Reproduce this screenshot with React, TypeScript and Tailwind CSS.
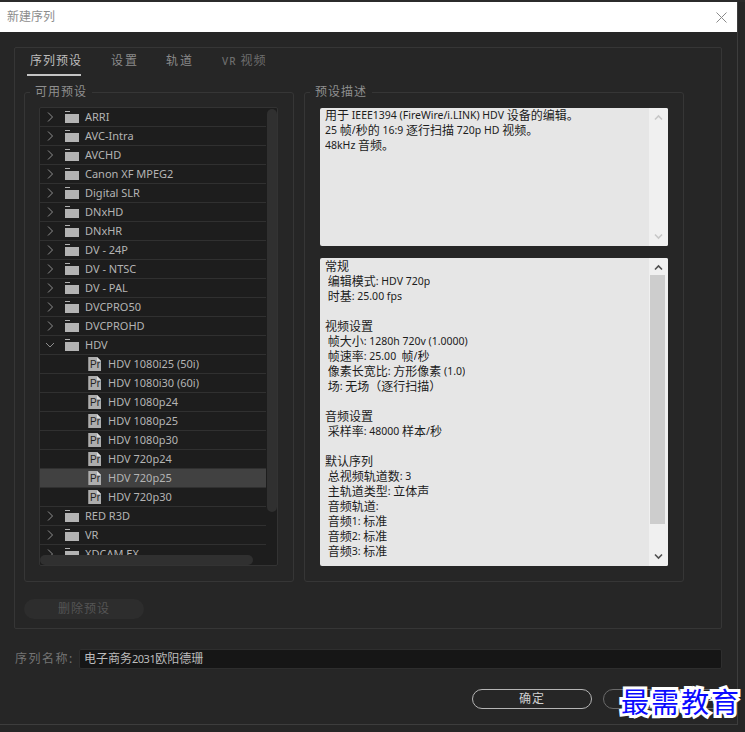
import React from 'react'

const presets = ['ARRI', 'AVC-Intra', 'AVCHD', 'Canon XF MPEG2', 'Digital SLR', 'DNxHD', 'DNxHR', 'DV - 24P', 'DV - NTSC', 'DV - PAL', 'DVCPRO50', 'DVCPROHD']
const hdv = ['HDV 1080i25 (50i)', 'HDV 1080i30 (60i)', 'HDV 1080p24', 'HDV 1080p25', 'HDV 1080p30', 'HDV 720p24', 'HDV 720p25', 'HDV 720p30']
const after = ['RED R3D', 'VR', 'XDCAM EX']

const description = `用于 IEEE1394 (FireWire/i.LINK) HDV 设备的编辑。
25 帧/秒的 16:9 逐行扫描 720p HD 视频。
48kHz 音频。`

const details = `常规
 编辑模式: HDV 720p
 时基: 25.00 fps

视频设置
 帧大小: 1280h 720v (1.0000)
 帧速率: 25.00  帧/秒
 像素长宽比: 方形像素 (1.0)
 场: 无场（逐行扫描）

音频设置
 采样率: 48000 样本/秒

默认序列
 总视频轨道数: 3
 主轨道类型: 立体声
 音频轨道:
 音频1: 标准
 音频2: 标准
 音频3: 标准`

// chinese runs are a bit larger than the latin ones in the reference
function TextBlock({ text }: { text: string }) {
  return (
    <div className="flex-1 pl-[5px] whitespace-pre">
      {text.split('\n').map((line, n) => (
        <div key={n} className="h-[15px] leading-[15px] overflow-hidden">
          {line.split(/([\u3000-\u9fff\uff00-\uffef]+)/).map((p, i) =>
            p === '' ? null : (
              <span key={i} className={i % 2 === 1 ? 'inline-block h-[15px] leading-[15px] align-top overflow-hidden text-[12px]' : 'inline-block h-[15px] leading-[15px] align-top overflow-hidden text-[10.5px]'}>{p}</span>
            )
          )}
        </div>
      ))}
    </div>
  )
}

function Chevron({ open }: { open?: boolean }) {
  return (
    <svg width="10" height="10" viewBox="0 0 10 10" fill="none" stroke="#8f8f8f" strokeWidth="1" className="shrink-0">
      {open ? <path d="M1 3l4 4 4-4" /> : <path d="M3 .5l4.500 4.500-4.500 4.500" />}
    </svg>
  )
}

function Folder() {
  return (
    <svg width="14" height="13" viewBox="0 0 14 13" className="shrink-0">
      <rect x="0" y="0" width="5" height="1" fill="#b0b0b0" />
      <rect x="0" y="3" width="14" height="9" fill="#b3b3b3" />
    </svg>
  )
}

function PrFile() {
  return (
    <svg width="13" height="14" viewBox="0 0 13 14" className="shrink-0">
      <path d="M0 0h9l4 4v10H0z" fill="#adadad" />
      <rect x="0" y="0" width="1" height="14" fill="#8a8a8a" />
      <path d="M9 0l4 4H9z" fill="#dcdcdc" />
      <text x="2" y="11" fontSize="10" fill="#222222" fontFamily="'Liberation Sans', sans-serif">Pr</text>
    </svg>
  )
}

function FolderRow({ name, open }: { name: string; open?: boolean }) {
  return (
    <div className="h-[19px] flex items-center border-b border-[#303030] text-[#b4b4b4] shrink-0">
      <div className="w-[25px] pl-[5px]"><Chevron open={open} /></div>
      <Folder />
      <span className="ml-[6px] whitespace-nowrap">{name}</span>
    </div>
  )
}

function FileRow({ name, active }: { name: string; active?: boolean }) {
  return (
    <div className={active ? 'h-[19px] flex items-center border-b border-[#303030] bg-[#414141] text-[#b4b4b4] shrink-0 pl-[48px]' : 'h-[19px] flex items-center border-b border-[#303030] text-[#b4b4b4] shrink-0 pl-[48px]'}>
      <PrFile />
      <span className="ml-[7px] whitespace-nowrap">{name}</span>
    </div>
  )
}

function Arrow({ up, color }: { up?: boolean; color: string }) {
  return (
    <svg width="9" height="7" viewBox="0 0 9 7" fill="none" stroke={color} strokeWidth="1.600">
      {up ? <path d="M1 5.500l3.500-3.500 3.500 3.500" /> : <path d="M1 1.500l3.500 3.500 3.500-3.500" />}
    </svg>
  )
}

export default function App() {
  return (
    <div className="relative w-[745px] h-[732px] overflow-hidden bg-[#262626] font-['Noto_Sans','Noto_Sans_CJK_SC',sans-serif] text-[11px]">
      <div className="h-[2px] bg-[#2b2b2b]" />
      <div className="w-[738px] h-[723px] border-r border-b border-[#3d3d3d]">
        {/* title bar */}
        <div className="h-[30px] bg-white flex items-center justify-between pl-[7px] pr-[10px]">
          <span className="text-[12px] text-[#8c8c8c]">新建序列</span>
          <svg width="11" height="11" viewBox="0 0 11 11" stroke="#8a8a8a" strokeWidth="1" fill="none">
            <path d="M.5.500l10 10M10.500.500l-10 10" />
          </svg>
        </div>

        <div className="pl-[14px] pr-[15px] pt-[15px]">
          {/* main panel */}
          <div className="h-[582px] border border-[#363636] rounded-[2px] pl-[9px]">
            <div className="h-[25px] mb-[11px] flex items-start pt-[4px] text-[12px] tracking-[1px] leading-[18px]">
              <div className="ml-[3px] w-[54px] border-b-2 border-[#c4c4c4] h-[24px] text-[#bdbdbd] whitespace-nowrap pl-[3px]">序列预设</div>
              <div className="ml-[30px] w-[55px] text-[#8a8a8a] tracking-[2px]">设置</div>
              <div className="w-[56px] text-[#8a8a8a] tracking-[2px]">轨道</div>
              <div className="text-[#6e6e6e] whitespace-nowrap tracking-[1px]"><span className="text-[10px] font-medium">VR</span> 视频</div>
            </div>

            <div className="flex gap-[10px]">
              {/* available presets */}
              <fieldset className="w-[270px] h-[498px] border border-[#363636] rounded-[3px] pl-[14px]">
                <legend className="-ml-[9px] px-[5px] h-[16px] leading-[16px] text-[12px] tracking-[1px] text-[#8f8f8f]">可用预设</legend>
                <div className="mt-[7px] w-[239px] h-[459px] flex border border-[#333333] rounded-[2px] bg-[#1d1d1d] overflow-hidden">
                  <div className="w-[226px] shrink-0 flex flex-col">
                    <div className="h-[447px] shrink-0 overflow-hidden flex flex-col">
                      {presets.map((p) => <FolderRow key={p} name={p} />)}
                      <FolderRow name="HDV" open />
                      {hdv.map((h) => <FileRow key={h} name={h} active={h === 'HDV 720p25'} />)}
                      {after.map((a) => <FolderRow key={a} name={a} />)}
                    </div>
                    <div className="h-[10px] w-[213px] rounded-[5px] bg-[#303030]" />
                  </div>
                  <div className="w-[10px] h-[403px] ml-[1px] mt-[1px] rounded-[5px] bg-[#303030]" />
                </div>
              </fieldset>

              {/* preset description */}
              <fieldset className="w-[380px] h-[498px] border border-[#363636] rounded-[3px] pl-[15px]">
                <legend className="-ml-[10px] px-[5px] h-[16px] leading-[16px] text-[12px] tracking-[1px] text-[#8f8f8f]">预设描述</legend>
                <div className="mt-[8px] w-[348px] h-[138px] flex bg-[#e6e6e6] rounded-[2px] overflow-hidden text-[#1c1c1c]">
                  <TextBlock text={description} />
                  <div className="w-[19px] bg-[#f0f0f0] flex flex-col items-center justify-between pt-[6px] pb-[6px]">
                    <Arrow up color="#c8c8c8" />
                    <Arrow color="#c8c8c8" />
                  </div>
                </div>
                <div className="mt-[12px] w-[348px] h-[308px] flex bg-[#e6e6e6] rounded-[2px] overflow-hidden text-[#1c1c1c] pt-[1px]">
                  <TextBlock text={details} />
                  <div className="w-[19px] -mt-[1px] bg-[#f0f0f0] flex flex-col items-center justify-between pt-[6px] pb-[6px] relative">
                    <Arrow up color="#505050" />
                    <div className="absolute left-[1px] top-[17px] w-[15px] h-[249px] bg-[#cdcdcd]" />
                    <Arrow color="#505050" />
                  </div>
                </div>
              </fieldset>
            </div>

            <div className="mt-[17px] w-[120px] h-[20px] rounded-[10px] bg-[#2d2d2d] text-center text-[12px] tracking-[1px] leading-[20px] text-[#555555]">删除预设</div>
          </div>

          {/* sequence name */}
          <div className="mt-[20px] flex items-center h-[20px]">
            <span className="w-[65px] pl-[1px] text-[12px] tracking-[1.500px] text-[#747474] whitespace-nowrap">序列名称:</span>
            <div className="flex-1 h-[20px] bg-[#161616] border border-[#2e2e2e] rounded-[2px] pl-[4px] text-[12px] leading-[18px] text-[#bdbdbd]">电子商务<span className="text-[11px] tracking-[-0.500px]">2031</span>欧阳德珊</div>
          </div>

          {/* buttons */}
          <div className="mt-[20px] -mr-[1px] flex justify-end gap-[11px]">
            <button className="w-[120px] h-[20px] rounded-[10px] border border-[#b5b5b5] text-[12px] leading-[18px] tracking-[1px] text-[#d0d0d0]">确定</button>
            <button className="w-[120px] h-[20px] rounded-[10px] border border-[#6a6a6a]" />
          </div>
        </div>
      </div>

      {/* watermark */}
      <div className="absolute left-[621px] top-[683px] text-[28px] leading-[36px] font-normal tracking-[2px] whitespace-nowrap text-[#0a0aff] font-['Noto_Sans_CJK_SC',sans-serif] [-webkit-text-stroke:6px_#ffffff] [paint-order:stroke_fill]">最需教育</div>
    </div>
  )
}
